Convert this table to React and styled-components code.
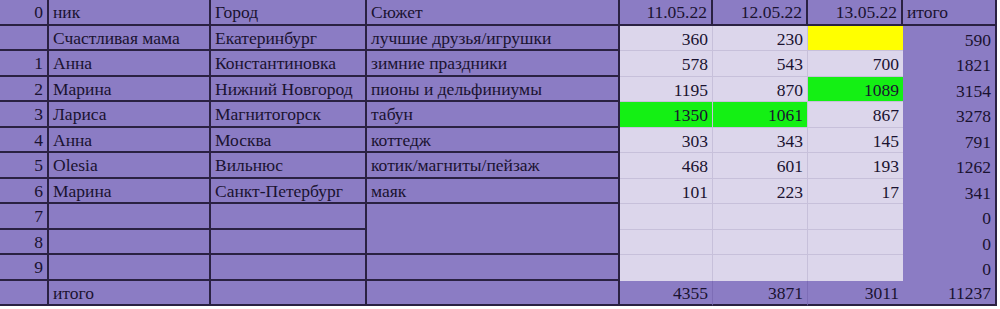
import React from "react";
import styled, { createGlobalStyle } from "styled-components";

const GlobalStyle = createGlobalStyle`
    body {
        margin: 0;
        background: #ffffff;
    }
`;

const DARK = "#2a2142";
const FAINT = "#c7c0da";

const tones = {
    purple: "#8b7cc4",
    data: "#dcd6eb",
    yellow: "#ffff00",
    green: "#14f014",
};

const lines = {
    dark: `2px solid ${DARK}`,
    faint: `1px solid ${FAINT}`,
    soft: `1px solid #7d6db6`,
    none: "none",
};

const Sheet = styled.div`
    display: grid;
    grid-template-columns: 49px 162px 156px 253px 93px 95px 95px 94px;
    grid-template-rows: repeat(12, 25.5px);
    width: 997px;
    font-family: "Liberation Serif", "Times New Roman", serif;
    font-size: 17.5px;
    color: #1a1230;
`;

const Cell = styled.div`
    box-sizing: border-box;
    display: flex;
    align-items: flex-end;
    justify-content: ${(p) => (p.$align === "right" ? "flex-end" : "flex-start")};
    padding: 0 4px 2px 4px;
    background: ${(p) => tones[p.$tone || "purple"]};
    border-right: ${(p) => lines[p.$right || "dark"]};
    border-bottom: ${(p) => lines[p.$bottom || "dark"]};
    grid-row: ${(p) => (p.$span ? `span ${p.$span}` : "auto")};
    white-space: nowrap;
    overflow: hidden;
    line-height: 1;
`;

const rows = [
    { i: "", nick: "Счастливая мама", city: "Екатеринбург", plot: "лучшие друзья/игрушки", d: [360, 230, ""], hl: { 2: "yellow" }, total: 590 },
    { i: 1, nick: "Анна", city: "Константиновка", plot: "зимние праздники", d: [578, 543, 700], total: 1821 },
    { i: 2, nick: "Марина", city: "Нижний Новгород", plot: "пионы и дельфиниумы", d: [1195, 870, 1089], hl: { 2: "green" }, total: 3154 },
    { i: 3, nick: "Лариса", city: "Магнитогорск", plot: "табун", d: [1350, 1061, 867], hl: { 0: "green", 1: "green" }, total: 3278 },
    { i: 4, nick: "Анна", city: "Москва", plot: "коттедж", d: [303, 343, 145], total: 791 },
    { i: 5, nick: "Olesia", city: "Вильнюс", plot: "котик/магниты/пейзаж", d: [468, 601, 193], total: 1262 },
    { i: 6, nick: "Марина", city: "Санкт-Петербург", plot: "маяк", d: [101, 223, 17], total: 341 },
    { i: 7, nick: "", city: "", plot: "", span: 2, d: ["", "", ""], total: 0 },
    { i: 8, nick: "", city: "", d: ["", "", ""], total: 0 },
    { i: 9, nick: "", city: "", plot: "", d: ["", "", ""], total: 0 },
];

const dates = ["11.05.22", "12.05.22", "13.05.22"];
const sums = [4355, 3871, 3011];

export default function App() {
    return (
        <>
            <GlobalStyle />
            <Sheet>
                {/* header */}
                <Cell $align="right">0</Cell>
                <Cell>ник</Cell>
                <Cell>Город</Cell>
                <Cell>Сюжет</Cell>
                {dates.map((d) => (
                    <Cell key={d} $align="right">{d}</Cell>
                ))}
                <Cell>итого</Cell>

                {rows.map((r, n) => (
                    <React.Fragment key={n}>
                        <Cell $align="right">{r.i}</Cell>
                        <Cell>{r.nick}</Cell>
                        <Cell>{r.city}</Cell>
                        {r.plot !== undefined && <Cell $span={r.span}>{r.plot}</Cell>}
                        {r.d.map((v, k) => (
                            <Cell
                                key={k}
                                $align="right"
                                $tone={(r.hl && r.hl[k]) || "data"}
                                $right={k === 2 ? "none" : "faint"}
                                $bottom={n === rows.length - 1 ? "none" : "faint"}
                            >
                                {v}
                            </Cell>
                        ))}
                        <Cell $align="right" $bottom="none">{r.total}</Cell>
                    </React.Fragment>
                ))}

                {/* totals */}
                <Cell />
                <Cell>итого</Cell>
                <Cell />
                <Cell />
                {sums.map((s, k) => (
                    <Cell key={k} $align="right" $right={k === 2 ? "none" : "soft"}>{s}</Cell>
                ))}
                <Cell $align="right">11237</Cell>
            </Sheet>
        </>
    );
}
